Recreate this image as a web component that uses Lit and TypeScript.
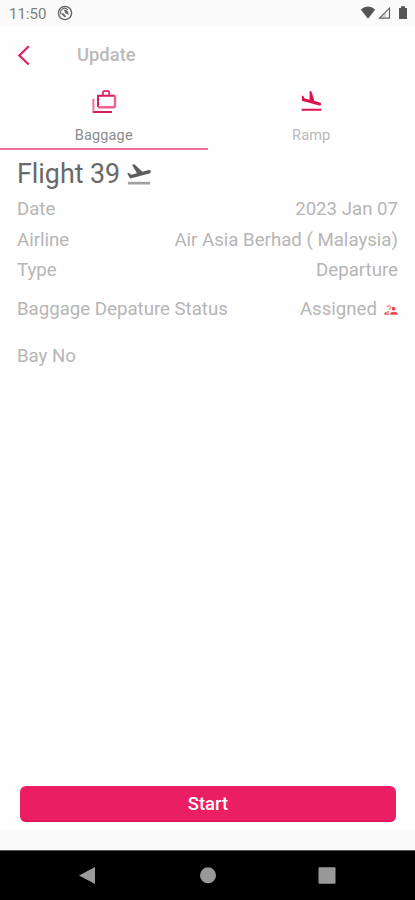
import { LitElement, html, css } from "lit";
import { customElement } from "lit/decorators.js";

@customElement("app-root")
export class AppRoot extends LitElement {
  static styles = css`
    :host {
      display: flex;
      flex-direction: column;
      height: 900px;
      width: 415px;
      overflow: hidden;
      background: #fefefe;
      color: #b6b6b6;
      font-family: Roboto, "Liberation Sans", sans-serif;
    }
    svg { display: block; flex: none; }
    .status {
      height: 27px;
      box-sizing: border-box;
      background: #fafafa;
      display: flex;
      align-items: center;
      padding: 0 7px 0 9px;
      color: #808080;
      font-size: 15px;
    }
    .noisy { margin-left: 11px; margin-top: -2px; }
    .signals { margin-left: auto; margin-top: -1px; display: flex; align-items: center; }
    .bar {
      height: 56px;
      display: flex;
      align-items: center;
      padding-left: 17px;
    }
    .title {
      margin: -2px 0 0 46px;
      font-size: 18.4px;
      font-weight: 500;
      color: #bababa;
    }
    .tabs { display: flex; height: 67px; }
    .tab {
      flex: 1;
      box-sizing: border-box;
      display: flex;
      flex-direction: column;
      align-items: center;
      padding-top: 6px;
      font-size: 14.5px;
      color: #b8b8b8;
    }
    .tab span { margin-top: 12px; line-height: 17px; letter-spacing: 0.15px; }
    .tab.on { color: #8c8c8c; border-bottom: 2px solid #f0709b; }
    .body { flex: 1; padding: 0 17px; font-size: 18.65px; }
    .flight {
      display: flex;
      align-items: center;
      height: 44px;
      font-size: 26.8px;
      color: #696969;
    }
    .flight .name { padding-top: 4px; }
    .flight svg { margin: 3px 0 0 5px; }
    .row { display: flex; justify-content: space-between; align-items: center; height: 30.5px; }
    .row.state { height: 47px; }
    .value { display: flex; align-items: center; }
    .value svg { margin: 2px 0 0 7px; }
    .start {
      height: 36px;
      margin: 0 19px 7px 20px;
      box-sizing: border-box;
      border: 0;
      border-bottom: 1px solid #d30f50;
      border-radius: 6px;
      background: #e91e63;
      color: #fff;
      font: 500 18.5px Roboto, sans-serif;
      padding: 0;
    }
    .gap { height: 21px; background: #fafafa; }
    .nav {
      height: 50px;
      box-sizing: border-box;
      border-top: 1px solid #555;
      background: #000;
    }
  `;

  render() {
    return html`
      <div class="status">
        <span class="clock">11:50</span>
        <svg class="noisy" width="16" height="16" viewBox="0 0 16 16" fill="none" stroke="#666">
          <circle cx="8" cy="8" r="6.6" stroke-width="1.4" />
          <path d="M4.200 9.500a4 4 0 0 1 6.600-4.500" stroke-width="1.200" />
          <path d="M5.200 8.500L8.500 11.800" stroke-width="1.800" />
          <path d="M6.500 4.800Q11.800 4.500 11.600 10.200L9.800 8.800 8.200 8.600 8 7z" fill="#666" stroke="none" />
        </svg>
        <div class="signals">
          <svg width="48" height="16" viewBox="0 0 48 16">
            <path d="M.8 4.5Q8-1.6 15.2 4.5L8 13.8z" fill="#555" />
            <path d="M19.5 13.2h10V3.2z" fill="none" stroke="#666" stroke-width="1.2" />
            <path d="M19 13.6L26 6v7.6z" fill="#888" opacity=".35" />
            <path d="M39 3h2V1.2h4V3h2v11h-8z" fill="#555" />
          </svg>
        </div>
      </div>
      <div class="bar">
        <svg width="14" height="22" viewBox="0 0 14 22">
          <path d="M11.800 2.300L2.300 11.500l9.500 9" fill="none" stroke="#e0205f" stroke-width="2.200" />
        </svg>
        <span class="title">Update</span>
      </div>
      <div class="tabs">
        <div class="tab on">
          <svg width="26" height="26" viewBox="0 0 26 26" fill="none">
            <path d="M2.400 9.800v12" stroke="#f0709b" stroke-width="2" />
            <path d="M2 22.300q0 .8 1 .8H21" stroke="#d81b60" stroke-width="2" />
            <path d="M7 18V6.800H24" stroke="#d81b60" stroke-width="2" />
            <path d="M24 6.500V17q0 1.200-1.200 1.200H7" stroke="#f0608f" stroke-width="2.400" />
            <path d="M12 6V3.600q0-1.600 1.600-1.600h3q1.600 0 1.600 1.600V6" stroke="#e63c75" stroke-width="2" />
          </svg>
          <span>Baggage</span>
        </div>
        <div class="tab">
          <svg width="25" height="26" viewBox="0 0 24 25" fill="#e0114f">
            <path d="M2.5 19h19v2h-19v-2zm7.18-5.73l4.35 1.16 5.31 1.42c.8.21 1.62-.26 1.84-1.06.21-.8-.26-1.62-1.06-1.84l-5.31-1.42-2.76-9.02L10.12 2v8.28L5.15 8.95l-.93-2.32-1.45-.39v5.17l1.6.43 5.31 1.43z" />
          </svg>
          <span>Ramp</span>
        </div>
      </div>
      <div class="body">
        <div class="flight">
          <span class="name">Flight 39</span>
          <svg width="28" height="28" viewBox="0 0 24 24" fill="#5c5c5c">
            <path d="M22.07 9.64c-.21-.8-1.04-1.28-1.84-1.06L14.92 10l-6.9-6.43-1.93.51 4.14 7.17-4.97 1.33-1.97-1.54-1.45.39 1.82 3.16.77 1.33 1.6-.43 5.31-1.42 4.35-1.16L21 11.49c.81-.23 1.28-1.05 1.07-1.85z" />
            <path d="M2.5 18.700h19v2.300h-19z" fill="#a0a0a0" />
          </svg>
        </div>
        <div class="row"><span class="k1">Date</span><span class="v1">2023 Jan 07</span></div>
        <div class="row"><span class="k2">Airline</span><span class="v2">Air Asia Berhad ( Malaysia)</span></div>
        <div class="row"><span class="k3">Type</span><span class="v3">Departure</span></div>
        <div class="row state">
          <span class="k4">Baggage Depature Status</span>
          <span class="value">
            <span>Assigned</span>
            <svg width="14" height="12" viewBox="0 0 14 12" fill="#e84a4a">
              <path d="M2.800 3.200Q3.200 1.700 4.800 1.700 6.600 1.900 6.500 3.600 6.300 5 4.800 5.700" fill="none" stroke="#ee8585" stroke-width="1.200" />
              <circle cx="9.600" cy="4.700" r="1.900" />
              <path d="M6.300 10.700V9.400Q6.500 7.800 9.900 7.800t3.700 1.600v1.300zM.4 10.700V9.200Q.8 7.600 5.400 7.300L5 8.500H2.200v1H5v1.200z" />
            </svg>
          </span>
        </div>
        <div class="row state"><span class="k5">Bay No</span></div>
      </div>
      <button class="start">Start</button>
      <div class="gap"></div>
      <div class="nav">
        <svg width="415" height="49" viewBox="0 0 415 49" fill="#999">
          <path d="M79 24.5L95 16V33z" />
          <circle cx="208" cy="24.300" r="8" />
          <rect x="318.500" y="16.300" width="17" height="16.500" rx="1" />
        </svg>
      </div>
    `;
  }
}
